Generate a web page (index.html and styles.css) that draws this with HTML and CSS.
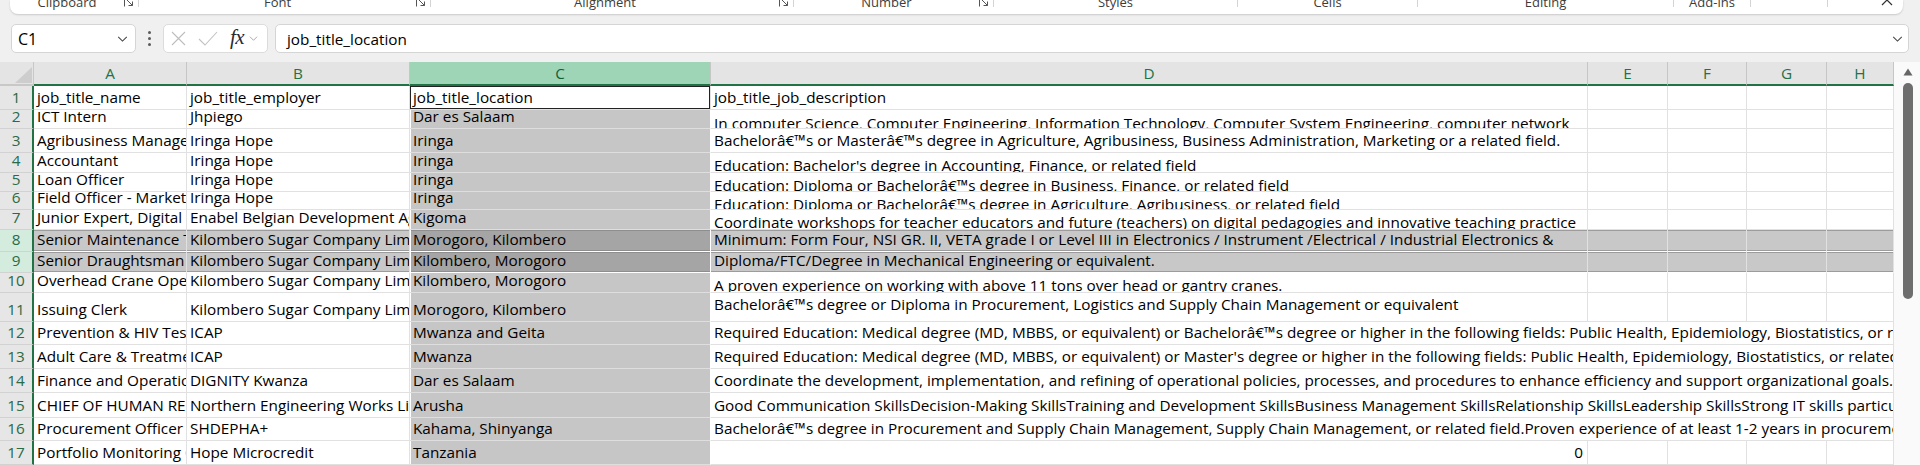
FILE: index.html
```html
<!DOCTYPE html>
<html lang="en">
<head>
<meta charset="utf-8">
<title>Sheet</title>
<link rel="stylesheet" href="styles.css">
</head>
<body>
<div class="app">
  <div class="ribbon">
    <div class="grp g1"><span class="lbl">Clipboard</span><svg class="dl" viewBox="0 0 10 10"><path d="M0.5 9.5V0.5H9.5M3 3L8.5 8.5M8.5 4.5V8.5H4.5"/></svg></div>
    <div class="grp g2"><span class="lbl">Font</span><svg class="dl" viewBox="0 0 10 10"><path d="M0.5 9.5V0.5H9.5M3 3L8.5 8.5M8.5 4.5V8.5H4.5"/></svg></div>
    <div class="grp g3"><span class="lbl">Alignment</span><svg class="dl" viewBox="0 0 10 10"><path d="M0.5 9.5V0.5H9.5M3 3L8.5 8.5M8.5 4.5V8.5H4.5"/></svg></div>
    <div class="grp g4"><span class="lbl">Number</span><svg class="dl" viewBox="0 0 10 10"><path d="M0.5 9.5V0.5H9.5M3 3L8.5 8.5M8.5 4.5V8.5H4.5"/></svg></div>
    <div class="grp g5"><span class="lbl">Styles</span></div>
    <div class="grp g6"><span class="lbl">Cells</span></div>
    <div class="grp g7"><span class="lbl">Editing</span></div>
    <div class="grp g8"><span class="lbl">Add-ins</span></div>
    <div class="grp g9"><span class="lbl"></span></div>
    <div class="rend"><svg class="collapse" viewBox="0 0 12 7"><path d="M1 6L6 1L11 6"/></svg></div>
  </div>

  <div class="fbar">
    <div class="namebox"><span class="nbtext">C1</span><svg class="chev" viewBox="0 0 12 7"><path d="M1 1L6 6L11 1"/></svg></div>
    <div class="dots"><i></i><i></i><i></i></div>
    <div class="fbtns">
      <svg class="fx-x" viewBox="0 0 15 15"><path d="M1 1L14 14M14 1L1 14"/></svg>
      <svg class="fx-ok" viewBox="0 0 20 15"><path d="M1 8L7 14L19 1"/></svg>
      <span class="fx">fx</span>
      <svg class="chev small" viewBox="0 0 12 7"><path d="M1 1L6 6L11 1"/></svg>
    </div>
    <div class="finput"><span class="ftext">job_title_location</span><svg class="chev" viewBox="0 0 12 7"><path d="M1 1L6 6L11 1"/></svg></div>
  </div>

  <div class="sheet">
    <div class="grid">
      <div class="corner"><span class="tri"></span></div>
      <div class="hd">A</div>
      <div class="hd">B</div>
      <div class="hd hc">C</div>
      <div class="hd">D</div>
      <div class="hd">E</div>
      <div class="hd">F</div>
      <div class="hd">G</div>
      <div class="hd">H</div>

      <div class="row">
        <div class="rh">1</div>
        <div class="c">job_title_name</div>
        <div class="c">job_title_employer</div>
        <div class="c act">job_title_location</div>
        <div class="c">job_title_job_description</div>
        <div class="c"></div><div class="c"></div><div class="c"></div><div class="c"></div>
      </div>

      <div class="row">
        <div class="rh">2</div>
        <div class="c">ICT Intern</div>
        <div class="c">Jhpiego</div>
        <div class="c cc">Dar es Salaam</div>
        <div class="c tp p5">In computer Science, Computer Engineering, Information Technology, Computer System Engineering, computer network</div>
        <div class="c"></div><div class="c"></div><div class="c"></div><div class="c"></div>
      </div>

      <div class="row">
        <div class="rh">3</div>
        <div class="c">Agribusiness Manager</div>
        <div class="c">Iringa Hope</div>
        <div class="c cc">Iringa</div>
        <div class="c">Bachelorâ€™s or Masterâ€™s degree in Agriculture, Agribusiness, Business Administration, Marketing or a related field.</div>
        <div class="c"></div><div class="c"></div><div class="c"></div><div class="c"></div>
      </div>

      <div class="row">
        <div class="rh">4</div>
        <div class="c">Accountant</div>
        <div class="c">Iringa Hope</div>
        <div class="c cc">Iringa</div>
        <div class="c tp p4">Education: Bachelor's degree in Accounting, Finance, or related field</div>
        <div class="c"></div><div class="c"></div><div class="c"></div><div class="c"></div>
      </div>

      <div class="row">
        <div class="rh">5</div>
        <div class="c">Loan Officer</div>
        <div class="c">Iringa Hope</div>
        <div class="c cc">Iringa</div>
        <div class="c tp p4">Education: Diploma or Bachelorâ€™s degree in Business, Finance, or related field</div>
        <div class="c"></div><div class="c"></div><div class="c"></div><div class="c"></div>
      </div>

      <div class="row">
        <div class="rh">6</div>
        <div class="c">Field Officer - Marketing</div>
        <div class="c">Iringa Hope</div>
        <div class="c cc">Iringa</div>
        <div class="c tp p4">Education: Diploma or Bachelorâ€™s degree in Agriculture, Agribusiness, or related field</div>
        <div class="c"></div><div class="c"></div><div class="c"></div><div class="c"></div>
      </div>

      <div class="row">
        <div class="rh">7</div>
        <div class="c">Junior Expert, Digital for Education</div>
        <div class="c">Enabel Belgian Development Agency</div>
        <div class="c cc">Kigoma</div>
        <div class="c tp p4">Coordinate workshops for teacher educators and future (teachers) on digital pedagogies and innovative teaching practice</div>
        <div class="c"></div><div class="c"></div><div class="c"></div><div class="c"></div>
      </div>

      <div class="row sel">
        <div class="rh">8</div>
        <div class="c">Senior Maintenance Technician</div>
        <div class="c">Kilombero Sugar Company Limited</div>
        <div class="c cc">Morogoro, Kilombero</div>
        <div class="c">Minimum: Form Four, NSI GR. II, VETA grade I or Level III in Electronics / Instrument /Electrical / Industrial Electronics &amp;</div>
        <div class="c"></div><div class="c"></div><div class="c"></div><div class="c"></div>
      </div>

      <div class="row sel">
        <div class="rh">9</div>
        <div class="c">Senior Draughtsman</div>
        <div class="c">Kilombero Sugar Company Limited</div>
        <div class="c cc">Kilombero, Morogoro</div>
        <div class="c">Diploma/FTC/Degree in Mechanical Engineering or equivalent.</div>
        <div class="c"></div><div class="c"></div><div class="c"></div><div class="c"></div>
      </div>

      <div class="row">
        <div class="rh">10</div>
        <div class="c">Overhead Crane Operator</div>
        <div class="c">Kilombero Sugar Company Limited</div>
        <div class="c cc">Kilombero, Morogoro</div>
        <div class="c tp p4">A proven experience on working with above 11 tons over head or gantry cranes.</div>
        <div class="c"></div><div class="c"></div><div class="c"></div><div class="c"></div>
      </div>

      <div class="row">
        <div class="rh">11</div>
        <div class="c">Issuing Clerk</div>
        <div class="c">Kilombero Sugar Company Limited</div>
        <div class="c cc">Morogoro, Kilombero</div>
        <div class="c tp p3">Bachelorâ€™s degree or Diploma in Procurement, Logistics and Supply Chain Management or equivalent</div>
        <div class="c"></div><div class="c"></div><div class="c"></div><div class="c"></div>
      </div>

      <div class="row">
        <div class="rh">12</div>
        <div class="c">Prevention &amp; HIV Testing</div>
        <div class="c">ICAP</div>
        <div class="c cc">Mwanza and Geita</div>
        <div class="c wide">Required Education: Medical degree (MD, MBBS, or equivalent) or Bachelorâ€™s degree or higher in the following fields: Public Health, Epidemiology, Biostatistics, or related field</div>
      </div>

      <div class="row">
        <div class="rh">13</div>
        <div class="c">Adult Care &amp; Treatment</div>
        <div class="c">ICAP</div>
        <div class="c cc">Mwanza</div>
        <div class="c wide">Required Education: Medical degree (MD, MBBS, or equivalent) or Master's degree or higher in the following fields: Public Health, Epidemiology, Biostatistics, or related field</div>
      </div>

      <div class="row">
        <div class="rh">14</div>
        <div class="c">Finance and Operations</div>
        <div class="c">DIGNITY Kwanza</div>
        <div class="c cc">Dar es Salaam</div>
        <div class="c wide">Coordinate the development, implementation, and refining of operational policies, processes, and procedures to enhance efficiency and support organizational goals.Manage</div>
      </div>

      <div class="row">
        <div class="rh">15</div>
        <div class="c">CHIEF OF HUMAN RESOURCES</div>
        <div class="c">Northern Engineering Works Limited</div>
        <div class="c cc">Arusha</div>
        <div class="c wide">Good Communication SkillsDecision-Making SkillsTraining and Development SkillsBusiness Management SkillsRelationship SkillsLeadership SkillsStrong IT skills particularly</div>
      </div>

      <div class="row">
        <div class="rh">16</div>
        <div class="c">Procurement Officer</div>
        <div class="c">SHDEPHA+</div>
        <div class="c cc">Kahama, Shinyanga</div>
        <div class="c wide">Bachelorâ€™s degree in Procurement and Supply Chain Management, Supply Chain Management, or related field.Proven experience of at least 1-2 years in procurement</div>
      </div>

      <div class="row">
        <div class="rh">17</div>
        <div class="c">Portfolio Monitoring Officer</div>
        <div class="c">Hope Microcredit</div>
        <div class="c cc">Tanzania</div>
        <div class="c num">0</div>
        <div class="c"></div><div class="c"></div><div class="c"></div><div class="c"></div>
      </div>
    </div>

    <div class="vscroll">
      <svg class="up" viewBox="0 0 10 8"><path d="M5 0.5L9.5 7.5H0.5Z"/></svg>
      <div class="thumb"></div>
    </div>
  </div>
</div>
</body>
</html>
```

FILE: styles.css
```css
* { box-sizing: border-box; margin: 0; padding: 0; }

html, body {
  width: 1920px;
  height: 465px;
  overflow: hidden;
}

body {
  background: #f0f0f0;
  font-family: "Open Sans", "Liberation Sans", sans-serif;
  color: #000;
}

.app {
  display: flex;
  flex-direction: column;
  height: 465px;
}

/* ---------- ribbon strip ---------- */
.ribbon {
  margin: 0 17px 0 10px;
  height: 14px;
  flex: none;
  background: #fff;
  border-radius: 0 0 8px 8px;
  box-shadow: 0 1px 2px rgba(0, 0, 0, 0.16);
  display: flex;
  overflow: hidden;
}

.grp {
  display: flex;
  align-items: flex-start;
  height: 7px;
  border-right: 1px solid #d4d4d4;
  flex: none;
}

.g1 { width: 129px; }
.g2 { width: 292px; }
.g3 { width: 363px; }
.g4 { width: 200px; }
.g5 { width: 244px; }
.g6 { width: 180px; }
.g7 { width: 256px; }
.g8 { width: 77px; }
.g9 { width: 77px; }

.lbl {
  flex: 1;
  text-align: center;
  font-size: 13px;
  line-height: 14px;
  margin-top: -5px;
  color: #3c3c3c;
  white-space: nowrap;
}

.dl {
  width: 10px;
  height: 10px;
  margin: -3px 4px 0 0;
  flex: none;
  fill: none;
  stroke: #555;
  stroke-width: 1;
}

.rend {
  flex: 1;
  display: flex;
  justify-content: flex-end;
  padding-right: 10px;
}

.collapse {
  width: 12px;
  height: 7px;
  margin-top: -1px;
  fill: none;
  stroke: #333;
  stroke-width: 1.2;
}

/* ---------- formula bar ---------- */
.fbar {
  height: 48px;
  flex: none;
  display: flex;
  align-items: flex-start;
  padding: 10px 11px 0 11px;
}

.namebox {
  width: 125px;
  height: 29px;
  background: #fff;
  border: 1px solid #d5d5d5;
  border-radius: 5px;
  display: flex;
  align-items: center;
  padding: 0 7px 0 6px;
  flex: none;
}

.nbtext {
  flex: 1;
  font-size: 16px;
  color: #000;
}

.chev {
  width: 11px;
  height: 6px;
  fill: none;
  stroke: #444;
  stroke-width: 1.2;
  flex: none;
}

.chev.small {
  width: 9px;
  height: 5px;
  stroke: #8a8a8a;
  stroke-width: 1;
}

.dots {
  width: 27px;
  height: 29px;
  display: flex;
  flex-direction: column;
  align-items: center;
  justify-content: center;
  gap: 3px;
  flex: none;
}

.dots i {
  width: 3px;
  height: 3px;
  border-radius: 50%;
  background: #5a5a5a;
  display: block;
}

.fbtns {
  width: 105px;
  height: 29px;
  background: #fff;
  border: 1px solid #dcdcdc;
  border-radius: 5px;
  display: flex;
  align-items: center;
  padding-left: 7px;
  flex: none;
}

.fx-x {
  width: 15px;
  height: 15px;
  fill: none;
  stroke: #bdbdbd;
  stroke-width: 1.1;
}

.fx-ok {
  width: 20px;
  height: 15px;
  margin-left: 12px;
  fill: none;
  stroke: #c2c2c2;
  stroke-width: 1.1;
}

.fx {
  font-family: "Liberation Serif", "DejaVu Serif", serif;
  font-style: italic;
  font-size: 21px;
  line-height: 20px;
  color: #2b2b2b;
  margin: -3px 0 0 12px;
  letter-spacing: -0.5px;
}

.fbtns .chev.small { margin-left: 5px; }

.finput {
  flex: 1;
  height: 29px;
  margin-left: 7px;
  background: #fff;
  border: 1px solid #d5d5d5;
  border-radius: 5px;
  display: flex;
  align-items: center;
  padding: 0 5px 0 11px;
}

.ftext {
  flex: 1;
  font-size: 15.3px;
  color: #000;
}

/* ---------- sheet ---------- */
.sheet {
  flex: 1;
  display: flex;
  background: #fff;
  overflow: hidden;
}

.grid {
  width: 1894px;
  flex: none;
  display: grid;
  grid-template-columns: 34px 153px 223px 301px 877px 80px 79px 80px 67px;
  grid-template-rows: 24px 24px 19px 24px 20px 19px 18px 20px 22px 21px 20px 29px 23px 24px 24px 25px 23px 24px;
  font-size: 15.3px;
  line-height: 17px;
}

.row { display: contents; }

.corner {
  background: #e4e4e4;
  border-right: 1px solid #c8c8c8;
  border-bottom: 2px solid #c8c8c8;
  display: flex;
  align-items: flex-end;
  justify-content: flex-end;
  padding: 0 1px 1px 0;
}

.tri {
  width: 0;
  height: 0;
  border-left: 17px solid transparent;
  border-bottom: 16px solid #cdcdcd;
}

.hd {
  background: #e4e4e4;
  border-right: 1px solid #c6c6c6;
  border-bottom: 2px solid #217346;
  color: #217346;
  display: flex;
  align-items: center;
  justify-content: center;
  padding-top: 1px;
}

.hd.hc {
  background: #9fd5b7;
  color: #155f36;
}

.rh {
  background: #e6e6e6;
  border-right: 2px solid #217346;
  border-bottom: 1px solid #d2d2d2;
  color: #2a6a47;
  display: flex;
  align-items: flex-end;
  justify-content: center;
  padding-bottom: 3px;
}

.sel .rh { background: #d3ecdd; }

.c {
  border-right: 1px solid #e1e1e1;
  border-bottom: 1px solid #e1e1e1;
  display: flex;
  align-items: flex-end;
  padding: 0 3px 3px 3px;
  white-space: nowrap;
  overflow: hidden;
  min-width: 0;
  color: #000;
}

.c.tp { align-items: flex-start; padding-bottom: 0; }
.c.p3 { padding-top: 3px; }
.c.p4 { padding-top: 4px; }
.c.p5 { padding-top: 5px; }

.c.wide { grid-column: span 5; }
.c.num { justify-content: flex-end; padding-right: 4px; }

.c.cc {
  background: #c6c6c6;
  box-shadow: inset 1px 0 0 #fff;
  border-right-color: #fff;
  border-bottom-color: #dedede;
}

.c.act {
  background: #fff;
  box-shadow: inset 0 0 0 1px #222;
}

.sel .c {
  background: #c8c8c8;
  border-bottom-color: #fff;
  box-shadow: inset 0 1px 0 #9c9c9c, inset 0 -1px 0 #9c9c9c;
}

.sel .c.cc {
  background: #a5a5a5;
  box-shadow: inset 1px 0 0 #fff, inset 0 1px 0 #8e8e8e, inset 0 -1px 0 #8e8e8e;
}

/* ---------- scrollbar ---------- */
.vscroll {
  flex: 1;
  background: #fafafa;
  display: flex;
  flex-direction: column;
  align-items: flex-start;
  padding: 6px 0 0 9px;
}

.up {
  width: 10px;
  height: 8px;
  fill: #666;
}

.thumb {
  width: 10px;
  height: 216px;
  margin-top: 7px;
  border-radius: 5px;
  background: #6e6e6e;
}
```
